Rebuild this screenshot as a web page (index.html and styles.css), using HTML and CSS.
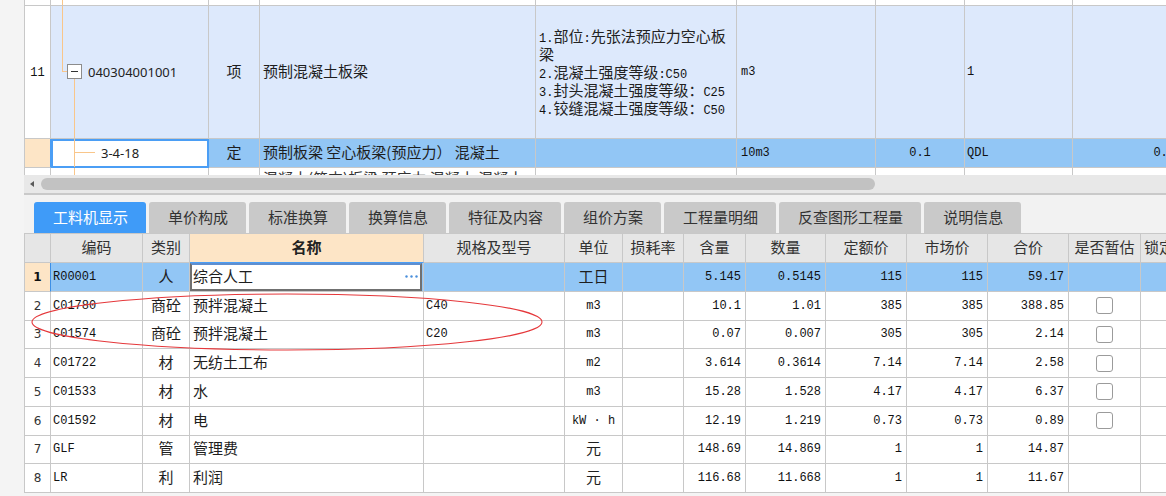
FILE: index.html
```html
<!DOCTYPE html>
<html lang="zh-CN">
<head>
<meta charset="utf-8">
<title>工料机显示</title>
<link rel="stylesheet" href="styles.css">
</head>
<body>
<div class="page">
  <div class="top">
    <div class="trow r0">
      <div class="c num"></div>
      <div class="c code"><span class="ln v-a"></span></div>
      <div class="c"></div><div class="c"></div><div class="c"></div><div class="c"></div><div class="c"></div><div class="c"></div><div class="c"></div>
    </div>
    <div class="trow r11">
      <div class="c num white"><span class="m">11</span></div>
      <div class="c code c11">
        <span class="ln v-top"></span><span class="ln h-top"></span>
        <span class="toggle"></span>
        <span class="ln v-bot"></span>
        <span class="qcode">040304001001</span>
      </div>
      <div class="c ctr">项</div>
      <div class="c">预制混凝土板梁</div>
      <div class="c feat"><div class="ft"><span class="m">1.</span>部位<span class="m">:</span>先张法预应力空心板梁<br><span class="m">2.</span>混凝土强度等级<span class="m">:C50</span><br><span class="m">3.</span>封头混凝土强度等级：<span class="m">C25</span><br><span class="m">4.</span>铰缝混凝土强度等级：<span class="m">C50</span></div></div>
      <div class="c pl4"><span class="m">m3</span></div>
      <div class="c"></div>
      <div class="c pl2"><span class="m">1</span></div>
      <div class="c"></div>
    </div>
    <div class="trow r12">
      <div class="c num peach"></div>
      <div class="c code sel">
        <span class="ln v-full"></span><span class="ln h-mid"></span>
        <span class="qcode sub">3-4-18</span>
      </div>
      <div class="c ctr">定</div>
      <div class="c">预制板梁 空心板梁(预应力） 混凝土</div>
      <div class="c"></div>
      <div class="c pl4"><span class="m">10m3</span></div>
      <div class="c ctr"><span class="m">0.1</span></div>
      <div class="c pl2"><span class="m">QDL</span></div>
      <div class="c rt pr7"><span class="m">0.1</span></div>
    </div>
    <div class="trow r13">
      <div class="c num"></div>
      <div class="c code"><span class="ln v-full"></span></div>
      <div class="c"></div>
      <div class="c topt">混凝土(简支)板梁 预应力 混凝土 混凝土</div>
      <div class="c"></div><div class="c"></div><div class="c"></div><div class="c"></div><div class="c"></div>
    </div>
  </div>

  <div class="hscroll"><span class="arrow"></span><span class="thumb"></span></div>

  <div class="panel">
    <div class="tabs">
      <div class="tab on">工料机显示</div>
      <div class="tab">单价构成</div>
      <div class="tab">标准换算</div>
      <div class="tab">换算信息</div>
      <div class="tab">特征及内容</div>
      <div class="tab">组价方案</div>
      <div class="tab">工程量明细</div>
      <div class="tab">反查图形工程量</div>
      <div class="tab">说明信息</div>
    </div>

    <div class="btable">
      <div class="brow bhead">
        <div class="c"></div>
        <div class="c ctr">编码</div>
        <div class="c ctr">类别</div>
        <div class="c ctr hname">名称</div>
        <div class="c ctr">规格及型号</div>
        <div class="c ctr">单位</div>
        <div class="c ctr">损耗率</div>
        <div class="c ctr">含量</div>
        <div class="c ctr">数量</div>
        <div class="c ctr">定额价</div>
        <div class="c ctr">市场价</div>
        <div class="c ctr">合价</div>
        <div class="c ctr">是否暂估</div>
        <div class="c">锁定</div>
      </div>

      <div class="brow selrow">
        <div class="c num peach bold selnum">1</div>
        <div class="c pl2"><span class="m">R00001</span></div>
        <div class="c ctr">人</div>
        <div class="c edit-cell"><div class="editor"><span>综合人工</span><svg class="dots" width="13" height="3" viewBox="0 0 13 3"><circle cx="1.5" cy="1.5" r="1.2"/><circle cx="6.5" cy="1.5" r="1.2"/><circle cx="11.5" cy="1.5" r="1.2"/></svg></div></div>
        <div class="c"></div>
        <div class="c ctr">工日</div>
        <div class="c"></div>
        <div class="c rt"><span class="m">5.145</span></div>
        <div class="c rt"><span class="m">0.5145</span></div>
        <div class="c rt"><span class="m">115</span></div>
        <div class="c rt"><span class="m">115</span></div>
        <div class="c rt"><span class="m">59.17</span></div>
        <div class="c"></div>
        <div class="c"></div>
      </div>

      <div class="brow">
        <div class="c num">2</div>
        <div class="c pl2"><span class="m">C01780</span></div>
        <div class="c ctr">商砼</div>
        <div class="c">预拌混凝土</div>
        <div class="c pl2"><span class="m">C40</span></div>
        <div class="c ctr"><span class="m">m3</span></div>
        <div class="c"></div>
        <div class="c rt"><span class="m">10.1</span></div>
        <div class="c rt"><span class="m">1.01</span></div>
        <div class="c rt"><span class="m">385</span></div>
        <div class="c rt"><span class="m">385</span></div>
        <div class="c rt"><span class="m">388.85</span></div>
        <div class="c ctr"><span class="cb"></span></div>
        <div class="c"></div>
      </div>

      <div class="brow">
        <div class="c num">3</div>
        <div class="c pl2"><span class="m">C01574</span></div>
        <div class="c ctr">商砼</div>
        <div class="c">预拌混凝土</div>
        <div class="c pl2"><span class="m">C20</span></div>
        <div class="c ctr"><span class="m">m3</span></div>
        <div class="c"></div>
        <div class="c rt"><span class="m">0.07</span></div>
        <div class="c rt"><span class="m">0.007</span></div>
        <div class="c rt"><span class="m">305</span></div>
        <div class="c rt"><span class="m">305</span></div>
        <div class="c rt"><span class="m">2.14</span></div>
        <div class="c ctr"><span class="cb"></span></div>
        <div class="c"></div>
      </div>

      <div class="brow">
        <div class="c num">4</div>
        <div class="c pl2"><span class="m">C01722</span></div>
        <div class="c ctr">材</div>
        <div class="c">无纺土工布</div>
        <div class="c"></div>
        <div class="c ctr"><span class="m">m2</span></div>
        <div class="c"></div>
        <div class="c rt"><span class="m">3.614</span></div>
        <div class="c rt"><span class="m">0.3614</span></div>
        <div class="c rt"><span class="m">7.14</span></div>
        <div class="c rt"><span class="m">7.14</span></div>
        <div class="c rt"><span class="m">2.58</span></div>
        <div class="c ctr"><span class="cb"></span></div>
        <div class="c"></div>
      </div>

      <div class="brow">
        <div class="c num">5</div>
        <div class="c pl2"><span class="m">C01533</span></div>
        <div class="c ctr">材</div>
        <div class="c">水</div>
        <div class="c"></div>
        <div class="c ctr"><span class="m">m3</span></div>
        <div class="c"></div>
        <div class="c rt"><span class="m">15.28</span></div>
        <div class="c rt"><span class="m">1.528</span></div>
        <div class="c rt"><span class="m">4.17</span></div>
        <div class="c rt"><span class="m">4.17</span></div>
        <div class="c rt"><span class="m">6.37</span></div>
        <div class="c ctr"><span class="cb"></span></div>
        <div class="c"></div>
      </div>

      <div class="brow">
        <div class="c num">6</div>
        <div class="c pl2"><span class="m">C01592</span></div>
        <div class="c ctr">材</div>
        <div class="c">电</div>
        <div class="c"></div>
        <div class="c ctr"><span class="m">kW · h</span></div>
        <div class="c"></div>
        <div class="c rt"><span class="m">12.19</span></div>
        <div class="c rt"><span class="m">1.219</span></div>
        <div class="c rt"><span class="m">0.73</span></div>
        <div class="c rt"><span class="m">0.73</span></div>
        <div class="c rt"><span class="m">0.89</span></div>
        <div class="c ctr"><span class="cb"></span></div>
        <div class="c"></div>
      </div>

      <div class="brow">
        <div class="c num">7</div>
        <div class="c pl2"><span class="m">GLF</span></div>
        <div class="c ctr">管</div>
        <div class="c">管理费</div>
        <div class="c"></div>
        <div class="c ctr">元</div>
        <div class="c"></div>
        <div class="c rt"><span class="m">148.69</span></div>
        <div class="c rt"><span class="m">14.869</span></div>
        <div class="c rt"><span class="m">1</span></div>
        <div class="c rt"><span class="m">1</span></div>
        <div class="c rt"><span class="m">14.87</span></div>
        <div class="c"></div>
        <div class="c"></div>
      </div>

      <div class="brow">
        <div class="c num">8</div>
        <div class="c pl2"><span class="m">LR</span></div>
        <div class="c ctr">利</div>
        <div class="c">利润</div>
        <div class="c"></div>
        <div class="c ctr">元</div>
        <div class="c"></div>
        <div class="c rt"><span class="m">116.68</span></div>
        <div class="c rt"><span class="m">11.668</span></div>
        <div class="c rt"><span class="m">1</span></div>
        <div class="c rt"><span class="m">1</span></div>
        <div class="c rt"><span class="m">11.67</span></div>
        <div class="c"></div>
        <div class="c"></div>
      </div>
    </div>
  </div>
</div>
<svg class="mark" width="1166" height="496" viewBox="0 0 1166 496"><ellipse cx="287" cy="322" rx="255" ry="28" fill="none" stroke="#e5383b" stroke-width="1.1"/></svg>
</body>
</html>
```

FILE: styles.css
```css
* { box-sizing: border-box; margin: 0; padding: 0; }
html, body { width: 1166px; height: 496px; overflow: hidden; }
body {
  background: #f4f4f4;
  font-family: "Noto Sans CJK SC", "Noto Sans", sans-serif;
  font-size: 15px;
  color: #1e1e1e;
  position: relative;
}
.page { margin-left: 24px; width: 1142px; overflow: hidden; }

/* generic cell */
.c {
  border-right: 1px solid #c8c8c8;
  border-bottom: 1px solid #c8c8c8;
  display: flex;
  align-items: center;
  padding: 0 3px 2px 3px;
  white-space: nowrap;
  overflow: hidden;
  line-height: 20px;
  position: relative;
}
.ctr { justify-content: center; }
.rt { justify-content: flex-end; padding-right: 4px; }
.pl2 { padding-left: 2px; }
.pl4 { padding-left: 4px; }
.pr7 { padding-right: 7px; }
.m { font-family: "Liberation Mono", monospace; font-size: 12px; color: #111; position: relative; top: 1px; }
.num { justify-content: center; padding: 0; font-family: "DejaVu Sans", sans-serif; font-size: 12px; color: #333; }
.bold { font-weight: bold; color: #111; }
.peach { background: #fde5c6; }
.white { background: #fff; }

/* top grid */
.top { height: 175px; overflow: hidden; background: #fff; border-left: 1px solid #c8c8c8; }
.trow { display: grid; grid-template-columns: 26px 158px 51px 276px 201px 139px 89px 108px 110px; }
.r0 { height: 6px; }
.r0 .c { padding: 0; }
.r11 { height: 133px; background: #dde9fc; }
.r12 { height: 29px; background: #92c6f5; }
.r13 { height: 40px; }
.topt { align-items: flex-start; padding-top: 1px; line-height: 17px; color: #333; }

.code { padding-left: 16px; }
.qcode { font-family: "Noto Sans", sans-serif; font-size: 13px; color: #222; margin-left: 6px; position: relative; top: 1px; }
.qcode.sub { margin-left: 34px; }
.sel {
  background: #fff;
  border-right-color: #4b9ef5;
  border-bottom-color: #4b9ef5;
  box-shadow: inset 2px 2px 0 #4b9ef5, inset -1px -1px 0 #4b9ef5;
}
.r12 .num { border-right-color: #4b9ef5; }

.ln { position: absolute; background: #f9c68a; }
.v-a { left: 11px; top: 0; bottom: 0; width: 1px; }
.v-top { left: 11px; top: 0; height: 66px; width: 1px; }
.h-top { left: 11px; top: 65px; width: 5px; height: 1px; }
.v-bot { left: 23px; top: 73px; bottom: 0; width: 1px; }
.v-full { left: 23px; top: 0; bottom: 0; width: 1px; }
.h-mid { left: 23px; top: 13px; width: 21px; height: 1px; }

.toggle {
  width: 15px; height: 15px;
  border: 1px solid #8c8c8c;
  background: #fff;
  position: relative;
  flex: none;
}
.toggle::after {
  content: "";
  position: absolute;
  left: 3px; top: 6px;
  width: 7px; height: 1px;
  background: #333;
}

.feat { white-space: normal; line-height: 17.25px; padding-bottom: 0; }
.ft { color: #222; }
.ft .m { line-height: 1; top: 0; }

/* scrollbar */
.hscroll {
  height: 18px;
  background: #e8e8e8;
  display: flex;
  align-items: center;
  padding-left: 6px;
}
.arrow {
  width: 0; height: 0;
  border-top: 3.5px solid transparent;
  border-bottom: 3.5px solid transparent;
  border-right: 4px solid #5a5a5a;
}
.thumb {
  margin-left: 7px;
  width: 834px;
  height: 12px;
  border-radius: 6px;
  background: #c2c2c2;
}

/* bottom panel */
.panel { border-top: 2px solid #c9c9c9; background: #f2f2f2; }
.tabs {
  display: flex;
  gap: 3px;
  height: 38px;
  align-items: flex-end;
  padding-left: 10px;
}
.tab {
  height: 31px;
  padding: 0 18px 2px 19px;
  background: #c9c9c9;
  border-radius: 3px 3px 0 0;
  display: flex;
  align-items: center;
  color: #333;
  font-size: 15px;
  line-height: 20px;
}
.tab.on { background: #3f9bf8; color: #fff; }

.btable { border-left: 1px solid #c8c8c8; background: #fff; }
.brow {
  display: grid;
  grid-template-columns: 26px 92px 47px 234px 141px 58px 61px 62px 80px 81px 81px 81px 72px 60px;
  height: 28.75px;
}
.bhead { height: 30px; border-top: 1px solid #c8c8c8; background: #e6e6e6; color: #333; }
.hname { background: #fde5c6; font-weight: bold; color: #222; border-bottom-color: #4b9ef5; }
.selrow { background: #92c6f5; }
.selnum { border-right-color: #3d8fe6; }
.edit-cell { padding: 0 1px 0 0; }
.editor {
  flex: 1;
  align-self: stretch;
  background: #fff;
  border: 2px solid #707070;
  border-top-color: #5f8fd0;
  display: flex;
  align-items: center;
  justify-content: space-between;
  padding: 0 2px 2px 1px;
}
.dots { fill: #4a8fdc; position: relative; top: 1px; }

.cb {
  width: 17px; height: 17px;
  border: 1px solid #9b9b9b;
  border-radius: 3px;
  background: #fff;
  position: relative;
  top: 1px;
}

.mark { position: absolute; left: 0; top: 0; pointer-events: none; }
```
